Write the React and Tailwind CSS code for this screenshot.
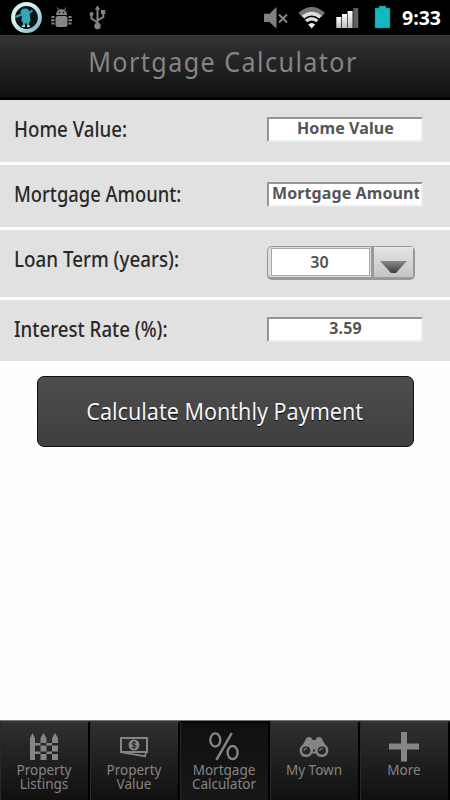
import React, { useState } from 'react';

const tabs = [
  { text: 'Property Listings', Icon: FenceIcon },
  { text: 'Property Value', Icon: CashIcon },
  { text: 'Mortgage Calculator', Icon: PercentIcon },
  { text: 'My Town', Icon: BinocularsIcon },
  { text: 'More', Icon: PlusIcon },
];

function FenceIcon() {
  return (
    <svg width="30" height="30" viewBox="0 0 30 30" fill="#858585">
      <path d="M1 28V6L3.5 1L6 6V28Z M11.5 11V6L14.5 1L17.5 6V11Z M23 11V6L26 1L29 6V11Z" />
      <path d="M6 11h5.5v2.5H6z M17.5 11H23v2.5h-5.5z M6 19.5h5.5V22H6z M17.5 19.5H23V22h-5.5z" />
      <path d="M11.5 13.5h6v6h-6z M23 13.5h6v6h-6z M11.5 22h6v6h-6z M23 22h6v6h-6z" />
    </svg>
  );
}

function CashIcon() {
  return (
    <svg width="30" height="30" viewBox="0 0 30 30">
      <path d="M3 20.5L26 24.2L27 20.5" fill="none" stroke="#858585" strokeWidth="1.7" />
      <rect x="2" y="6" width="26" height="14" fill="none" stroke="#858585" strokeWidth="2" />
      <circle cx="15" cy="13" r="5.5" fill="#858585" />
      <path d="M17 10.8C14.5 9.5 13 10.5 13 11.6C13 13.5 17 12.4 17 14.4C17 15.8 14.5 16.2 12.8 15.1M15 9V17" fill="none" stroke="#222" strokeWidth="1" />
    </svg>
  );
}

function PercentIcon() {
  return (
    <svg width="30" height="30" viewBox="0 0 30 30" fill="none" stroke="#858585">
      <ellipse cx="6.3" cy="8" rx="5" ry="6.6" strokeWidth="2.3" />
      <ellipse cx="23.6" cy="20.6" rx="5" ry="6.6" strokeWidth="2.3" />
      <path d="M22.8 1L7.4 27.8" strokeWidth="2.5" />
    </svg>
  );
}

function BinocularsIcon() {
  return (
    <svg width="30" height="30" viewBox="0 0 30 30">
      <path d="M1 17L6 9Q7 5 10 5Q13 5 13.2 8H16.8Q17 5 20 5Q23 5 24 9L29 17L24 24L16.5 21.5H13.5L6 24Z" fill="#858585" />
      <circle cx="7.2" cy="18.5" r="6.6" fill="#858585" />
      <circle cx="22.8" cy="18.5" r="6.6" fill="#858585" />
      <circle cx="7.2" cy="18.5" r="4.1" fill="#262626" />
      <circle cx="22.8" cy="18.5" r="4.1" fill="#262626" />
      <path d="M5 19Q5.2 16.3 8 16.3M20.6 19Q21 16.3 23.8 16.3" fill="none" stroke="#777" strokeWidth="1.3" />
      <circle cx="15" cy="18.5" r="1.2" fill="#333" />
    </svg>
  );
}

function PlusIcon() {
  return (
    <svg width="30" height="30" viewBox="0 0 30 30" fill="#858585">
      <path d="M12 0h6v11.5h12v6H18v12h-6v-12H0v-6h12z" />
    </svg>
  );
}

function StatusBar() {
  return (
    <div className="flex h-[35px] shrink-0 items-center bg-black">
      <svg width="450" height="35" viewBox="0 0 450 35">
        <defs>
          <linearGradient id="ring" x1="0" y1="0" x2="1" y2="1">
            <stop offset="0" stopColor="#c9f0f2" />
            <stop offset=".35" stopColor="#e3f2f2" />
            <stop offset="1" stopColor="#70b8c8" />
          </linearGradient>
          <linearGradient id="signal" x1="0" y1="0" x2="0" y2="1">
            <stop offset="0" stopColor="#fff" />
            <stop offset="1" stopColor="#bdbdbd" />
          </linearGradient>
        </defs>

        {/* mod badge */}
        <circle cx="26.5" cy="17.5" r="13.4" fill="#0b1416" stroke="url(#ring)" strokeWidth="4" />
        <path d="M20.5 13Q20.5 8.5 25.5 8.5Q29 8.5 29.5 12L30.5 20Q30 23.5 26 23.5Q22 23.5 21.5 20L22 15Z" fill="#35a7b1" />
        <path d="M22 14.5L15 17M29 13L32.5 10.5M24 23V26M28 23V26" stroke="#35a7b1" strokeWidth="2" />
        <path d="M22 26.3h3M27 26.3h3" stroke="#c8dada" strokeWidth="1.4" />

        {/* debugging robot */}
        <g fill="#858585">
          <path d="M56 15Q56.5 9.2 61.5 9.2Q66.5 9.2 67 15Z" />
          <path d="M58.5 10L57 7.5M64.5 10L66 7.5" stroke="#858585" strokeWidth="1" />
          <rect x="55.5" y="16" width="12" height="11" rx="2.5" />
          <path d="M51.5 16h3v2h-3z M51 19.2h3.5v2H51z M51.5 22.4h3v2h-3z M68.5 16h3v2h-3z M68.5 19.2H72v2h-3.5z M68.5 22.4h3v2h-3z" />
          <circle cx="59.5" cy="12.5" r=".8" fill="#000" />
          <circle cx="63.5" cy="12.5" r=".8" fill="#000" />
        </g>

        {/* usb */}
        <g fill="#858585" stroke="#858585">
          <path d="M97.5 26V9M97.5 22.5L91.5 18.5V14M97.5 20.5L103.3 17V12" fill="none" strokeWidth="2" />
          <path d="M97.5 5.5L100.2 9.5H94.8Z" stroke="none" />
          <circle cx="97.5" cy="26" r="3.2" stroke="none" />
          <circle cx="91.5" cy="14" r="2" stroke="none" />
          <path d="M101 10h4.2v4H101z" stroke="none" />
        </g>

        {/* muted */}
        <path d="M264 13.8h5.5L276.5 7V28.5L269.5 22H264Z" fill="#808080" />
        <path d="M279 14.5L287 22.5M287 14.5L279 22.5" stroke="#858585" strokeWidth="1.9" />

        {/* wifi */}
        <path d="M298.5 12.7Q311.7 1.2 325 12.7L321.5 17Q311.7 8.8 302 17Z" fill="#747474" />
        <g fill="none" stroke="#dedede">
          <path d="M303 17.2Q311.7 10.2 320.5 17.2" strokeWidth="3.6" />
          <path d="M306 21.1Q311.7 16.4 317.4 21.1" strokeWidth="3.2" />
        </g>
        <path d="M308.2 24.6Q311.7 21.6 315.2 24.6L311.7 28.5Z" fill="#eee" />

        {/* signal bars */}
        <g fill="url(#signal)">
          <rect x="336.3" y="17" width="5" height="11" />
          <rect x="342" y="14" width="5" height="14" />
          <rect x="347.6" y="11" width="5" height="17" />
        </g>
        <rect x="353.3" y="8" width="5" height="20" fill="#606060" />

        {/* battery */}
        <path d="M379 6h7v2h4v20h-15V8h4z" fill="#14b9c0" stroke="#0a6d73" strokeWidth=".5" />
        <text x="402" y="25" fill="#fff" fontFamily="Open Sans, Noto Sans, sans-serif" fontSize="19" fontWeight="700" textLength="39" lengthAdjust="spacingAndGlyphs">9:33</text>
      </svg>
    </div>
  );
}

function Row({ label, labelClass, className, children }) {
  return (
    <div className={`flex shrink-0 items-start border-b-[3px] border-white bg-[#e1e1e1] pl-3.5 ${className}`}>
      <label className="w-[253px] pt-[15px] text-[21px] leading-[29px] font-medium whitespace-nowrap text-[#292929]">
        <span className={`inline-block origin-left ${labelClass}`}>{label}</span>
      </label>
      {children}
    </div>
  );
}

function Field({ value, onChange }) {
  return (
    <input
      value={value}
      onChange={onChange}
      className="mt-[17px] h-[25px] w-[156px] rounded-none border-t-2 border-r-2 border-b-2 border-l-2 border-t-[#959595] border-r-[#eee] border-b-[#eee] border-l-[#959595] bg-white pr-0.5 pb-[3px] pl-[3px] text-center text-[16px] leading-[18px] font-bold tracking-[0.1px] text-[#555] outline-none"
    />
  );
}

export default function App() {
  const [homeValue, setHomeValue] = useState('Home Value');
  const [amount, setAmount] = useState('Mortgage Amount');
  const [rate, setRate] = useState('3.59');
  const [activeTab, setActiveTab] = useState(2);

  return (
    <div className="flex h-[800px] w-[450px] flex-col overflow-hidden bg-[#fefefe] font-['Noto_Sans','Open_Sans',sans-serif]">
      <StatusBar />

      <header className="flex h-[65px] shrink-0 justify-center border-t border-b-[3px] border-t-[#393939] border-b-black bg-linear-to-b from-[#333] to-[#111]">
        <h1 className="pt-[6px] text-[27px] leading-[40px] tracking-[1.55px] whitespace-nowrap text-[#858585]">
          <span className="-ml-1 inline-block scale-x-[0.93]">Mortgage Calculator</span>
        </h1>
      </header>

      <Row label="Home Value:" labelClass="scale-x-[0.89]" className="h-[65px]">
        <Field value={homeValue} onChange={(e) => setHomeValue(e.target.value)} />
      </Row>
      <Row label="Mortgage Amount:" labelClass="scale-x-[0.875]" className="h-[65px]">
        <Field value={amount} onChange={(e) => setAmount(e.target.value)} />
      </Row>
      <Row label="Loan Term (years):" labelClass="scale-x-[0.895]" className="h-[70px]">
        <button className="mt-4 flex h-[34px] w-[148px] rounded-[5px] border border-r-2 border-b-[3px] border-[#999] bg-[#ddd]">
          <span className="mt-px ml-[3px] flex h-[28px] w-[99px] items-center justify-center border border-[#aaa] bg-white pr-0.5 text-[16px] font-semibold text-[#505050]">30</span>
          <span className="ml-px flex h-full flex-1 items-center justify-center border-l-[3px] border-[#999] bg-linear-to-b from-[#e5e5e5] to-[#c5c5c5] pt-[11px]">
            <svg width="28" height="14" viewBox="0 0 28 14">
              <defs>
                <linearGradient id="arrow" x1="0" y1="0" x2="0" y2="1">
                  <stop offset="0" stopColor="#8b8b8b" />
                  <stop offset="1" stopColor="#3e3e3e" />
                </linearGradient>
              </defs>
              <path d="M0 0H27L16 12H11Z" fill="url(#arrow)" />
            </svg>
          </span>
        </button>
      </Row>
      <Row label="Interest Rate (%):" labelClass="scale-x-[0.89]" className="h-[64px]">
        <Field value={rate} onChange={(e) => setRate(e.target.value)} />
      </Row>

      <main className="flex flex-1 items-start pt-3 pl-[36.5px]">
        <button className="flex h-[71px] w-[377px] items-center justify-center rounded-[7px] border border-[#111] bg-linear-to-b from-[#4d4d4d] to-[#3f3f3f] text-[23px] whitespace-nowrap text-[#f5f5f5] text-shadow-[0_1px_1px_#000]">
          <span className="inline-block scale-x-[0.937]">Calculate Monthly Payment</span>
        </button>
      </main>

      <nav className="grid h-20 shrink-0 grid-cols-5 border-t border-[#777] bg-black">
        {tabs.map(({ text, Icon }, i) => (
          <button
            key={text}
            onClick={() => setActiveTab(i)}
            className={`flex flex-col items-center border-t-2 border-r-2 border-l border-r-black border-l-[#292929] bg-linear-to-b pt-[9px] pr-px text-[13.5px] leading-[14px] text-[#858585] ${
              i === activeTab ? 'border-t-[#080808] from-[#101010] to-[#171717]' : 'border-t-[#343434] from-[#303030] to-[#101010]'
            }`}
          >
            <Icon />
            <span className="mt-px w-[70px]">{text}</span>
          </button>
        ))}
      </nav>
    </div>
  );
}
